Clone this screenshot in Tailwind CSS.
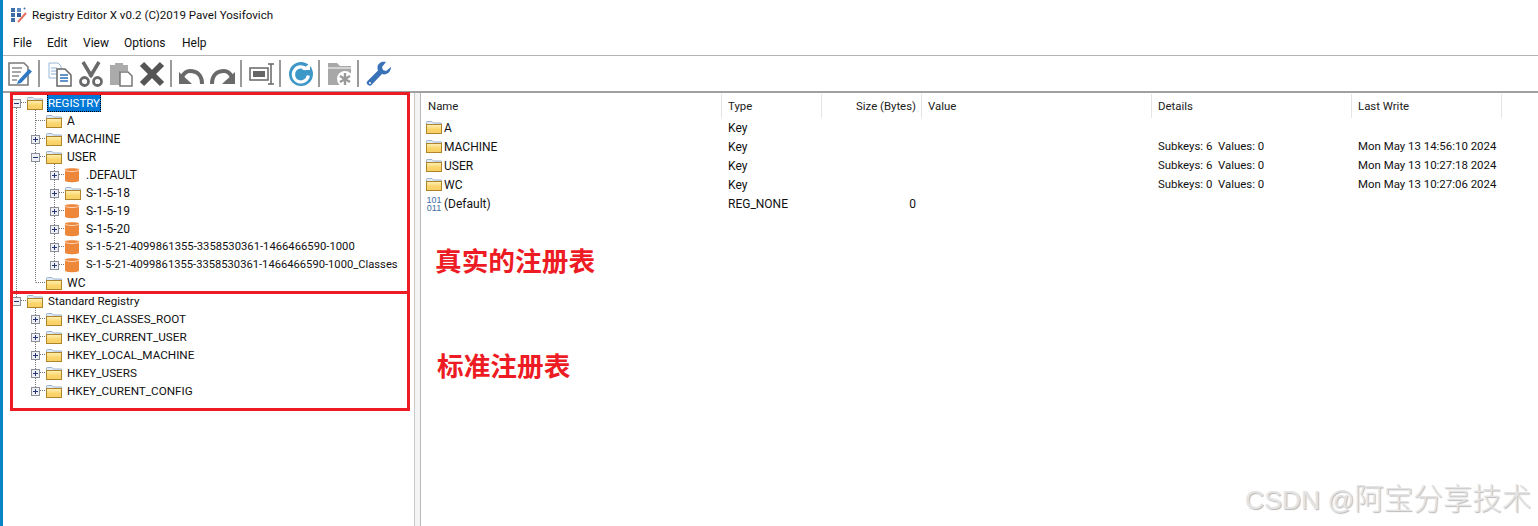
<!DOCTYPE html>
<html><head><meta charset="utf-8"><title>Registry Editor X</title>
<script src="https://cdn.jsdelivr.net/npm/@tailwindcss/browser@4"></script></head>
<body class="bg-white overflow-hidden">
<svg width="0" height="0" class="absolute">
<defs>
<linearGradient id="fg" x1="0" y1="0" x2="0" y2="1"><stop offset="0" stop-color="#fff0b8"/><stop offset=".55" stop-color="#fbd56c"/><stop offset="1" stop-color="#f6cf66"/></linearGradient>
<symbol id="folder" viewBox="0 0 16 13"><path d="M.5 12.500V1.200Q.5.500 1.200.500H6l1.500 1.500h8v10.500z" fill="#dfeafa" stroke="#9fb4cc"/><rect x=".5" y="3.500" width="15" height="9" fill="url(#fg)" stroke="#b0852a"/></symbol>
<symbol id="db" viewBox="0 0 14 16"><path d="M0 2.500C0 .8 14 .8 14 2.500V13.500C14 15.800 0 15.800 0 13.500z" fill="#ee873a"/><path d="M0 3C2 5 12 5 14 3" fill="none" stroke="#fbd9bd" stroke-width="1"/></symbol>
<symbol id="plus" viewBox="0 0 9 9"><rect x=".5" y=".5" width="8" height="8" fill="#eef0f5" stroke="#8a8f98"/><path d="M2 4.500h5M4.500 2v5" stroke="#24367a"/></symbol>
<symbol id="minus" viewBox="0 0 9 9"><rect x=".5" y=".5" width="8" height="8" fill="#eef0f5" stroke="#8a8f98"/><path d="M2 4.500h5" stroke="#24367a"/></symbol>
</defs></svg>
<div class="relative flex flex-col w-[1538px] h-[526px] border-l-[3px] border-[#0a84c4] font-['Roboto','Noto_Sans_CJK_SC',sans-serif] text-[12px] text-[#111]">
  <div class="flex items-center h-[30px] shrink-0 pl-[8px] gap-[5px]">
    <svg width="16" height="16" viewBox="0 0 16 16"><g fill="#3f6fa8"><rect x="0" y="1" width="4" height="4"/><rect x="6" y="1" width="4" height="4" fill="#5b8cc4"/><rect x="0" y="6" width="4" height="4"/><rect x="6" y="6" width="4" height="4" fill="#2f5f9c"/><rect x="0" y="11" width="4" height="4"/></g><path d="M7 15l8-9" stroke="#e8705f" stroke-width="2"/><circle cx="13.500" cy="1.500" r="1" fill="#3f6fa8"/></svg>
    <span class="text-[11.600px] pt-[1px]">Registry Editor X v0.2 (C)2019 Pavel Yosifovich</span>
  </div>
  <div class="flex items-center h-[26px] shrink-0 border-b-[1px] border-[#b4b4b4]">
    <span class="ml-[10px] w-[34px]">File</span><span class="w-[36px]">Edit</span><span class="w-[41px]">View</span><span class="w-[58px]">Options</span><span>Help</span>
  </div>
  <div class="flex items-center h-[37px] shrink-0 border-b-[2px] border-[#a0a0a0]">
    <svg class="ml-[4px]" width="26" height="26" viewBox="0 0 26 26"><path d="M2 2h15l4 4v18H2z" fill="#fff" stroke="#7a7a7a" stroke-width="1.600"/><path d="M5 7h10M5 11h9M5 15h7M5 19h5" stroke="#8a8a8a" stroke-width="1.600"/><path d="M11 20l11-12 3 2.500L14 22l-4 1z" fill="#2f78c4"/></svg>
    <div class="ml-[5px] w-[2px] h-[27px] bg-[#9a9a9a]"></div>
    <svg class="ml-[7px]" width="26" height="26" viewBox="0 0 26 26"><path d="M2 2h9l3 3v12H2z" fill="#fff" stroke="#9ab8d8"/><path d="M4 7h6M4 10h6M4 13h6" stroke="#8ab0d8"/><path d="M10 8h8l6 6v11H10z" fill="#fff" stroke="#666" stroke-width="1.500"/><path d="M13 14h8M13 17h8M13 20h8" stroke="#2f70b8" stroke-width="1.600"/></svg>
    <svg class="ml-[5px]" width="26" height="26" viewBox="0 0 26 26"><path d="M5 1l9 15M21 1L12 16" stroke="#6a6a6a" stroke-width="3.500"/><circle cx="6.500" cy="20.500" r="4" fill="none" stroke="#6a6a6a" stroke-width="2.800"/><circle cx="19.500" cy="20.500" r="4" fill="none" stroke="#6a6a6a" stroke-width="2.800"/></svg>
    <svg class="ml-[4px]" width="26" height="26" viewBox="0 0 26 26"><path d="M2 4h5V2h8v2h5v6h-8v14H2z" fill="#ababab"/><path d="M12 11h8l4 4v10H12z" fill="#fff" stroke="#777" stroke-width="1.500"/></svg>
    <svg class="ml-[5px]" width="26" height="26" viewBox="0 0 26 26"><path d="M3 3l20 20M23 3L3 23" stroke="#555" stroke-width="6"/></svg>
    <div class="ml-[5px] w-[2px] h-[27px] bg-[#9a9a9a]"></div>
    <svg class="ml-[6px]" width="26" height="26" viewBox="0 0 26 26"><path d="M24 23C24 14 19 10 12 10C9 10 6 12 4 16" fill="none" stroke="#6a6a6a" stroke-width="4"/><path d="M1 23h13L1 11z" fill="#6a6a6a"/></svg>
    <svg class="ml-[6px]" width="26" height="26" viewBox="0 0 26 26"><path d="M2 23C2 14 7 10 14 10C17 10 20 12 22 16" fill="none" stroke="#6a6a6a" stroke-width="4"/><path d="M25 23H12L25 11z" fill="#6a6a6a"/></svg>
    <div class="ml-[4px] w-[2px] h-[27px] bg-[#9a9a9a]"></div>
    <svg class="ml-[7px]" width="26" height="26" viewBox="0 0 26 26"><rect x="1" y="7" width="18" height="12" fill="#fff" stroke="#666" stroke-width="1.500"/><rect x="4" y="10" width="12" height="6" fill="#666"/><path d="M19 3h6M22 3v20M19 23h6" stroke="#666" stroke-width="1.500" fill="none"/></svg>
    <div class="ml-[4px] w-[2px] h-[27px] bg-[#9a9a9a]"></div>
    <svg class="ml-[7px]" width="26" height="26" viewBox="0 0 26 26"><circle cx="13" cy="13" r="12" fill="#3d97c7"/><path d="M18.500 8.500a7.500 7.500 0 1 0 1.800 6" fill="none" stroke="#fff" stroke-width="3.200"/><path d="M14 9h8V2z" fill="#fff"/></svg>
    <div class="ml-[4px] w-[2px] h-[27px] bg-[#9a9a9a]"></div>
    <svg class="ml-[7px]" width="26" height="26" viewBox="0 0 26 26"><path d="M1 24V2h9l3 3h11v19z" fill="#a8a8a8"/><path d="M1 7h23" stroke="#fff"/><circle cx="18" cy="18" r="8" fill="#fff"/><path d="M18 12v12M13 15l10 6M23 15l-10 6" stroke="#999" stroke-width="2.400"/></svg>
    <div class="ml-[4px] w-[2px] h-[27px] bg-[#9a9a9a]"></div>
    <svg class="ml-[7px]" width="26" height="26" viewBox="0 0 26 26"><path d="M25 6l-5 4-3-1-1-3 4-5c-4-1-8 1-8.500 5 0 1.500 0 2.500.5 3.500L1.500 20c-1.500 1.500-.5 3 0 3.500s2.500 2 4 .5L16 13c4 1.500 9-1.500 9-7z" fill="#3a72b8"/><circle cx="4" cy="22" r="1" fill="#fff"/></svg>
  </div>
  <div class="flex flex-1 min-h-0">
    <div class="relative w-[412px] shrink-0 pt-[1px] border-r border-[#c8c8c8] whitespace-nowrap">
      <svg class="absolute left-0 -top-px" width="412" height="330" fill="none" stroke="#777" stroke-dasharray="1 1">
        <path d="M13.500 16V206M18 10.500h6M32.500 16V190.500M33 28.500h10M37 46.500h5M37 64.500h5M33 190.500h10M51.500 70V172.500M56 82.500h6M56 100.500h6M56 118.500h6M56 136.500h6M56 154.500h6M56 172.500h6M32.500 214V298.500M18 208.500h6M37 226.500h5M37 244.500h5M37 262.500h5M37 280.500h5M37 298.500h5"/>
      </svg>
      <div class="relative flex flex-col">
        <div class="flex items-center h-[18px] pl-[9px]"><svg class="w-[9px] h-[9px]"><use href="#minus"/></svg><svg class="ml-[6px] w-[16px] h-[13px]"><use href="#folder"/></svg><span class="ml-[4px] px-[1px] h-[18px] text-[11.500px] leading-[18px] bg-[#0078d7] text-white outline-1 outline-dotted outline-black -outline-offset-1">REGISTRY</span></div>
        <div class="flex items-center h-[18px] pl-[43px]"><svg class="w-[16px] h-[13px]"><use href="#folder"/></svg><span class="ml-[5px]">A</span></div>
        <div class="flex items-center h-[18px] pl-[28px]"><svg class="w-[9px] h-[9px]"><use href="#plus"/></svg><svg class="ml-[6px] w-[16px] h-[13px]"><use href="#folder"/></svg><span class="ml-[5px]">MACHINE</span></div>
        <div class="flex items-center h-[18px] pl-[28px]"><svg class="w-[9px] h-[9px]"><use href="#minus"/></svg><svg class="ml-[6px] w-[16px] h-[13px]"><use href="#folder"/></svg><span class="ml-[5px]">USER</span></div>
        <div class="flex items-center h-[18px] pl-[47px]"><svg class="w-[9px] h-[9px]"><use href="#plus"/></svg><svg class="ml-[6px] w-[14px] h-[16px]"><use href="#db"/></svg><span class="ml-[7px]">.DEFAULT</span></div>
        <div class="flex items-center h-[18px] pl-[47px]"><svg class="w-[9px] h-[9px]"><use href="#plus"/></svg><svg class="ml-[6px] w-[16px] h-[13px]"><use href="#folder"/></svg><span class="ml-[5px]">S-1-5-18</span></div>
        <div class="flex items-center h-[18px] pl-[47px]"><svg class="w-[9px] h-[9px]"><use href="#plus"/></svg><svg class="ml-[6px] w-[14px] h-[16px]"><use href="#db"/></svg><span class="ml-[7px]">S-1-5-19</span></div>
        <div class="flex items-center h-[18px] pl-[47px]"><svg class="w-[9px] h-[9px]"><use href="#plus"/></svg><svg class="ml-[6px] w-[14px] h-[16px]"><use href="#db"/></svg><span class="ml-[7px]">S-1-5-20</span></div>
        <div class="flex items-center h-[18px] pl-[47px]"><svg class="w-[9px] h-[9px]"><use href="#plus"/></svg><svg class="ml-[6px] w-[14px] h-[16px]"><use href="#db"/></svg><span class="ml-[7px] pt-[1px] text-[11.250px]">S-1-5-21-4099861355-3358530361-1466466590-1000</span></div>
        <div class="flex items-center h-[18px] pl-[47px]"><svg class="w-[9px] h-[9px]"><use href="#plus"/></svg><svg class="ml-[6px] w-[14px] h-[16px]"><use href="#db"/></svg><span class="ml-[7px] pt-[1px] text-[11.200px]">S-1-5-21-4099861355-3358530361-1466466590-1000_Classes</span></div>
        <div class="flex items-center h-[18px] pl-[43px]"><svg class="w-[16px] h-[13px]"><use href="#folder"/></svg><span class="ml-[5px]">WC</span></div>
        <div class="flex items-center h-[18px] pl-[9px]"><svg class="w-[9px] h-[9px]"><use href="#minus"/></svg><svg class="ml-[6px] w-[16px] h-[13px]"><use href="#folder"/></svg><span class="ml-[5px] pt-[1px] text-[11.600px]">Standard Registry</span></div>
        <div class="flex items-center h-[18px] pl-[28px]"><svg class="w-[9px] h-[9px]"><use href="#plus"/></svg><svg class="ml-[6px] w-[16px] h-[13px]"><use href="#folder"/></svg><span class="ml-[5px] pt-[1px] text-[11.700px]">HKEY_CLASSES_ROOT</span></div>
        <div class="flex items-center h-[18px] pl-[28px]"><svg class="w-[9px] h-[9px]"><use href="#plus"/></svg><svg class="ml-[6px] w-[16px] h-[13px]"><use href="#folder"/></svg><span class="ml-[5px] pt-[1px] text-[11.700px]">HKEY_CURRENT_USER</span></div>
        <div class="flex items-center h-[18px] pl-[28px]"><svg class="w-[9px] h-[9px]"><use href="#plus"/></svg><svg class="ml-[6px] w-[16px] h-[13px]"><use href="#folder"/></svg><span class="ml-[5px] pt-[1px] text-[11.700px]">HKEY_LOCAL_MACHINE</span></div>
        <div class="flex items-center h-[18px] pl-[28px]"><svg class="w-[9px] h-[9px]"><use href="#plus"/></svg><svg class="ml-[6px] w-[16px] h-[13px]"><use href="#folder"/></svg><span class="ml-[5px] pt-[1px] text-[11.700px]">HKEY_USERS</span></div>
        <div class="flex items-center h-[18px] pl-[28px]"><svg class="w-[9px] h-[9px]"><use href="#plus"/></svg><svg class="ml-[6px] w-[16px] h-[13px]"><use href="#folder"/></svg><span class="ml-[5px] pt-[1px] text-[11.700px]">HKEY_CURENT_CONFIG</span></div>
      </div>
    </div>
    <div class="w-[5px] shrink-0 bg-[#f4f4f4]"></div>
    <div class="flex-1 border-l border-[#b8b8b8]">
      <div class="grid grid-cols-[300px_100px_100px_230px_200px_150px_20px] h-[25px] pt-[1px] text-[#222] text-[11.400px] leading-[24px]">
        <div class="pl-[7px]">Name</div>
        <div class="pl-[6px] border-l border-[#e5e5e5]">Type</div>
        <div class="pr-[5px] text-right border-l border-[#e5e5e5]">Size (Bytes)</div>
        <div class="pl-[6px] border-l border-[#e5e5e5]">Value</div>
        <div class="pl-[6px] border-l border-[#e5e5e5]">Details</div>
        <div class="pl-[6px] border-l border-[#e5e5e5]">Last Write</div>
        <div class="border-l border-[#e5e5e5]"></div>
      </div>
      <div class="grid grid-cols-[300px_100px_100px_230px_200px_150px] auto-rows-[19px] items-center whitespace-nowrap">
        <div class="flex items-center pl-[5px] gap-[2px]"><svg class="w-[16px] h-[13px]"><use href="#folder"/></svg>A</div><div class="pl-[7px]">Key</div><div></div><div></div><div></div><div></div>
        <div class="flex items-center pl-[5px] gap-[2px]"><svg class="w-[16px] h-[13px]"><use href="#folder"/></svg>MACHINE</div><div class="pl-[7px]">Key</div><div></div><div></div><div class="pl-[7px] text-[11.400px]">Subkeys: 6&nbsp; Values: 0</div><div class="pl-[7px] text-[11.450px]">Mon May 13 14:56:10 2024</div>
        <div class="flex items-center pl-[5px] gap-[2px]"><svg class="w-[16px] h-[13px]"><use href="#folder"/></svg>USER</div><div class="pl-[7px]">Key</div><div></div><div></div><div class="pl-[7px] text-[11.400px]">Subkeys: 6&nbsp; Values: 0</div><div class="pl-[7px] text-[11.450px]">Mon May 13 10:27:18 2024</div>
        <div class="flex items-center pl-[5px] gap-[2px]"><svg class="w-[16px] h-[13px]"><use href="#folder"/></svg>WC</div><div class="pl-[7px]">Key</div><div></div><div></div><div class="pl-[7px] text-[11.400px]">Subkeys: 0&nbsp; Values: 0</div><div class="pl-[7px] text-[11.450px]">Mon May 13 10:27:06 2024</div>
        <div class="flex items-center pl-[5px] gap-[2px]"><span class="w-[16px] text-[9px] leading-[8px] text-[#3d6f9f] font-['Liberation_Sans',sans-serif] text-center">101<br>011</span>(Default)</div><div class="pl-[7px]">REG_NONE</div><div class="pr-[5px] text-right">0</div><div></div><div></div><div></div>
      </div>
    </div>
  </div>
  <div class="absolute left-[7px] top-[92px] w-[400px] h-[202px] border-[3px] border-[#ed1c24]"></div>
  <div class="absolute left-[7px] top-[291px] w-[400px] h-[120px] border-[3px] border-[#ed1c24]"></div>
  <div class="absolute left-[432px] top-[242px] text-[26.700px] leading-[36px] font-bold text-[#ed1c24] font-['Noto_Sans_CJK_SC',sans-serif]">真实的注册表</div>
  <div class="absolute left-[434px] top-[347px] text-[26.700px] leading-[36px] font-bold text-[#ed1c24] font-['Noto_Sans_CJK_SC',sans-serif]">标准注册表</div>
  <div class="absolute left-[1242px] top-[480px] leading-[38px] whitespace-nowrap text-[#e4e4e4] font-['Liberation_Sans','Noto_Sans_CJK_SC',sans-serif] [text-shadow:1px_1px_1px_#b8b8b8]"><span class="text-[26.500px]">CSDN @</span><span class="text-[29.500px] font-light">阿宝分享技术</span></div>
</div>
</body></html>
